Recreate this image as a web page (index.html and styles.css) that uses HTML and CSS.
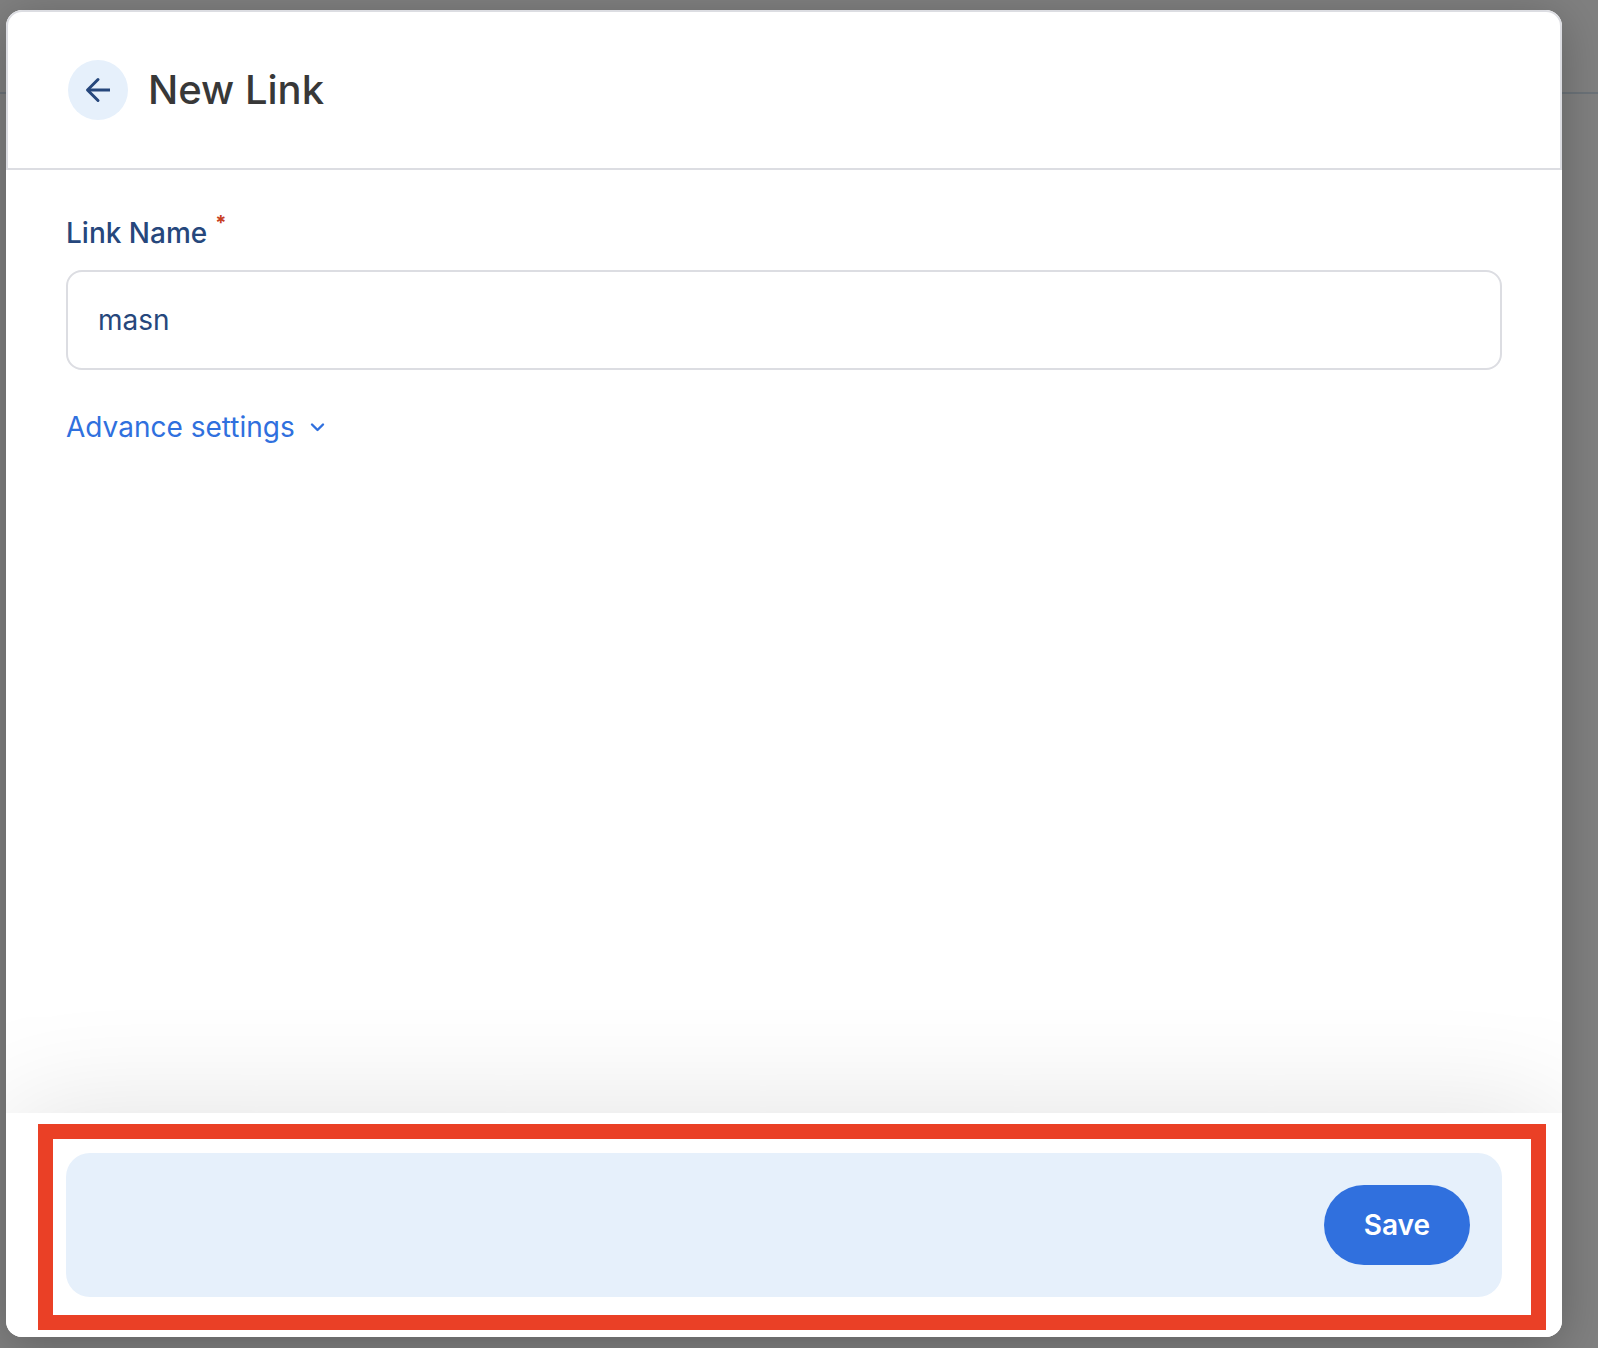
FILE: index.html
```html
<!DOCTYPE html>
<html lang="en">
<head>
  <meta charset="utf-8">
  <meta name="viewport" content="width=device-width, initial-scale=1">
  <title>New Link</title>
  <link rel="stylesheet" href="styles.css">
</head>
<body>
  <div class="page-bar"></div>
  <div class="overlay">
    <form class="modal" role="dialog" aria-labelledby="modal-title">
      <header class="modal-header">
        <button class="back-button" type="button" aria-label="Back">
          <svg width="26" height="26" viewBox="0 0 26 26" fill="none" stroke="currentColor" stroke-width="3" stroke-linecap="round" stroke-linejoin="round" aria-hidden="true">
            <path d="M13 2.5 L2.5 13 L13 23.5"/>
            <path d="M3 13 H25" stroke-linecap="butt"/>
          </svg>
        </button>
        <h1 class="modal-title" id="modal-title">New Link</h1>
      </header>
      <div class="modal-body">
        <label class="field-label" for="link-name">Link Name <span class="required">*</span></label>
        <input class="field-input" id="link-name" type="text" value="masn" required>
        <button class="advanced-toggle" type="button">
          Advance settings
          <svg width="16" height="16" viewBox="0 0 16 16" fill="none" stroke="currentColor" stroke-width="2.4" stroke-linecap="round" stroke-linejoin="round" aria-hidden="true">
            <path d="M3 5.5 L8.5 11 L14 5.5"/>
          </svg>
        </button>
      </div>
      <footer class="modal-footer">
        <div class="highlight">
          <div class="action-bar">
            <button class="save-button" type="submit">Save</button>
          </div>
        </div>
      </footer>
    </form>
  </div>
</body>
</html>
```
FILE: styles.css
```css
* {
  box-sizing: border-box;
}

body {
  margin: 0;
  min-height: 100vh;
  background: #808080;
  font-family: Inter, "Liberation Sans", sans-serif;
  font-size: 28px;
  line-height: 36px;
  color: #26477c;
}

button,
input {
  font: inherit;
  color: inherit;
}

button {
  padding: 0;
  border: 0;
  background: none;
  cursor: pointer;
}

.page-bar {
  height: 94px;
  border-bottom: 2px solid #6c7379;
}

.overlay {
  position: absolute;
  inset: 0;
  display: flex;
  padding: 10px 36px 11px 6px;
}

.modal {
  flex: 1;
  display: flex;
  flex-direction: column;
  overflow: hidden;
  border-radius: 16px;
  background: #fff;
  box-shadow: 0 8px 48px rgba(0, 0, 0, 0.25);
}

.modal-header {
  display: flex;
  align-items: center;
  gap: 20px;
  padding: 48px 60px;
  border: 2px solid #dcdde2;
  border-radius: 16px 16px 0 0;
}

.back-button {
  display: grid;
  place-items: center;
  width: 60px;
  height: 60px;
  border-radius: 50%;
  background: #e6f0fb;
}

.modal-title {
  margin: 0;
  font-size: 40px;
  line-height: 48px;
  font-weight: 500;
  color: #383838;
}

.modal-body {
  flex: 1;
  display: flex;
  flex-direction: column;
  align-items: flex-start;
  padding: 45px 60px;
}

.field-label {
  display: flex;
  gap: 8px;
  margin-bottom: 19px;
  font-weight: 500;
}

.required {
  font-size: 20px;
  line-height: 16px;
  font-weight: 700;
  color: #c8401f;
}

.field-input {
  width: 100%;
  height: 100px;
  padding: 0 30px;
  border: 2px solid #dcdde2;
  border-radius: 16px;
  background: #fff;
  outline: 0;
}

.advanced-toggle {
  display: flex;
  align-items: center;
  gap: 14px;
  margin-top: 39px;
  color: #3070de;
}

.modal-footer {
  padding: 11px 16px 7px 32px;
  background: #fff;
  box-shadow: 0 0 120px rgba(0, 0, 0, 0.12);
}

.highlight {
  padding: 14px 29px 18px 13px;
  border: 15px solid #ea4026;
}

.action-bar {
  display: flex;
  justify-content: flex-end;
  padding: 32px;
  border-radius: 24px;
  background: #e6f0fb;
}

.save-button {
  height: 80px;
  padding: 0 40px;
  border-radius: 40px;
  background: #3070de;
  color: #fff;
  font-weight: 600;
}
```
